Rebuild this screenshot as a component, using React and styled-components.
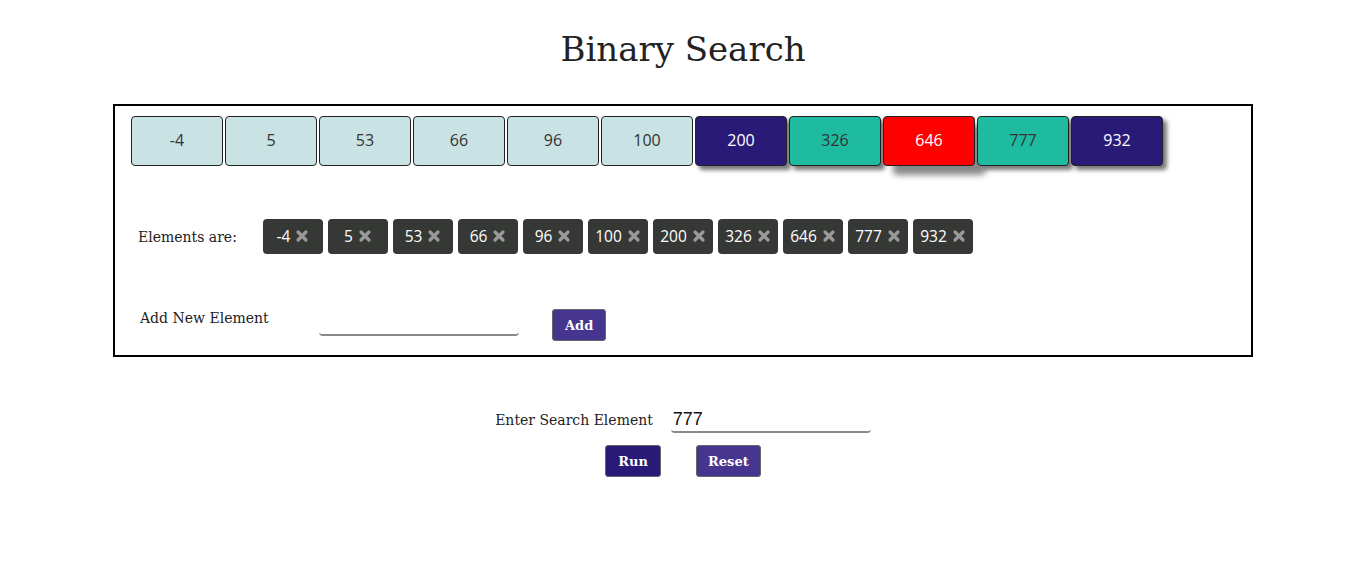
import React from 'react'
import styled, {createGlobalStyle, css} from 'styled-components'

const GlobalStyle = createGlobalStyle`
  body {
    margin: 0;
    background: #fff;
    font-family: Georgia, "DejaVu Serif", serif;
    color: #222;
  }
`

const Page = styled.div`
  display: flex;
  flex-direction: column;
  align-items: center;
  padding-top: 26px;
`

const Title = styled.h1`
  margin: 0 0 32px 0;
  font-family: "DejaVu Serif", Georgia, serif;
  font-weight: normal;
  font-size: 34px;
  line-height: 46px;
  color: #222;
`

const Panel = styled.div`
  box-sizing: border-box;
  width: 1140px;
  border: 2px solid #000;
  padding: 10px 15px 14px 16px;
`

const BarRow = styled.div`
  display: flex;
  gap: 2px;
`

const shades = {
  idle: css`background: #c9e2e3; color: #333;`,
  low: css`background: #2a1a78; color: #fff;`,
  found: css`background: #1fbba0; color: #333;`,
  mid: css`background: #ff0000; color: #fff;`
}

const Cell = styled.div`
  box-sizing: border-box;
  width: 92px;
  height: 50px;
  padding-bottom: 3px;
  border: 1px solid #222;
  border-radius: 4px;
  display: flex;
  align-items: center;
  justify-content: center;
  font-family: "Open Sans", "Noto Sans", sans-serif;
  font-size: 16px;
  ${props => shades[props.$state]}
  ${props => props.$state !== 'idle' && css`box-shadow: 4px 4px 4px #777;`}
  ${props => props.$state === 'mid' && css`box-shadow: 10px 9px 6px #888;`}
`

const Row = styled.div`
  display: flex;
  align-items: center;
`

const ElementsRow = styled(Row)`
  margin-top: 53px;
  padding-left: 7px;
`

const Label = styled.span`
  font-family: "DejaVu Serif", Georgia, serif;
  font-size: 14px;
  color: #222;
  width: ${props => props.$w}px;
`

const Chips = styled.div`
  display: flex;
  gap: 5px;
`

const Chip = styled.div`
  box-sizing: border-box;
  width: 60px;
  height: 35px;
  padding-bottom: 1px;
  background: #363836;
  border-radius: 4px;
  display: flex;
  align-items: center;
  justify-content: center;
  gap: 5px;
  color: #fff;
  font-family: "Open Sans", "Noto Sans", sans-serif;
  font-size: 15.5px;
`

const AddRow = styled(Row)`
  margin-top: 41px;
  padding-left: 9px;
`

const LineInput = styled.input`
  box-sizing: border-box;
  width: 200px;
  height: 26px;
  border: none;
  border-bottom: 2px solid #888;
  border-radius: 0 0 4px 4px;
  outline: none;
  background: transparent;
  font-family: "Liberation Sans", Arial, sans-serif;
  font-size: 18px;
  padding: 0 2px;
  color: #111;
`

const AddInput = styled(LineInput)`
  margin-top: 10px;
`

const Button = styled.button`
  box-sizing: border-box;
  height: 32px;
  padding: 0 ${props => props.$pad}px;
  border: 1px solid #666;
  border-radius: 3px;
  background: ${props => props.$dark ? '#2a1a78' : '#45358f'};
  color: #fff;
  font-family: "DejaVu Serif", Georgia, serif;
  font-weight: bold;
  font-size: 13px;
  cursor: pointer;
`

const AddButton = styled(Button)`
  margin-left: 33px;
  margin-top: 14px;
`

const Search = styled.div`
  margin-top: 50px;
  display: flex;
  flex-direction: column;
  align-items: center;
  gap: 12px;
`

const SearchRow = styled(Row)`
  gap: 18px;
`

const Buttons = styled(Row)`
  gap: 35px;
`

const Cross = () => (
  <svg width='14' height='14' viewBox='0 0 14 14'>
    <path d='M3 3 L11 11 M11 3 L3 11' stroke='#9a9a9a' strokeWidth='3.2' strokeLinecap='round' />
  </svg>
)

const data = [-4, 5, 53, 66, 96, 100, 200, 326, 646, 777, 932]
const states = ['idle', 'idle', 'idle', 'idle', 'idle', 'idle', 'low', 'found', 'mid', 'found', 'low']

export default function App () {
  return (
    <Page>
      <GlobalStyle />
      <Title>Binary Search</Title>
      <Panel>
        <BarRow>
          {data.map((v, i) => <Cell key={v} $state={states[i]}>{v}</Cell>)}
        </BarRow>
        <ElementsRow>
          <Label $w={125}>Elements are:</Label>
          <Chips>
            {data.map(v => (
              <Chip key={v}>{v}<Cross /></Chip>
            ))}
          </Chips>
        </ElementsRow>
        <AddRow>
          <Label $w={179}>Add New Element</Label>
          <AddInput />
          <AddButton $pad={12}>Add</AddButton>
        </AddRow>
      </Panel>
      <Search>
        <SearchRow>
          <Label>Enter Search Element</Label>
          <LineInput defaultValue='777' />
        </SearchRow>
        <Buttons>
          <Button $dark $pad={12}>Run</Button>
          <Button $pad={11}>Reset</Button>
        </Buttons>
      </Search>
    </Page>
  )
}
